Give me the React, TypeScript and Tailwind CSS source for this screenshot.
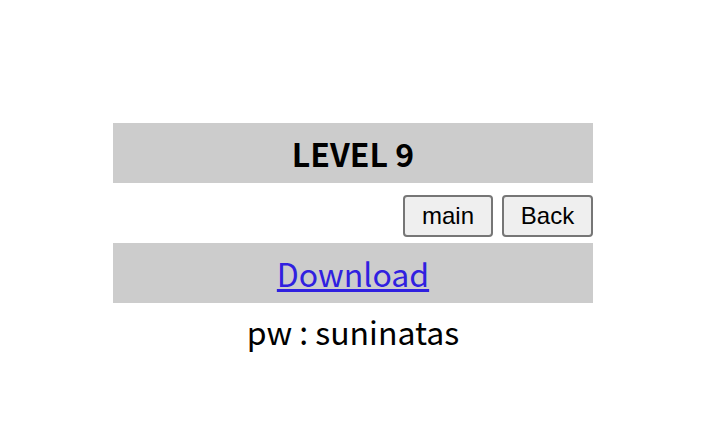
import React from "react";

const cjk = "font-['Noto_Sans_CJK_KR','Noto_Sans',sans-serif]";

export default function App() {
  return (
    <div className="w-[706px] h-[445px] bg-white flex flex-col items-center pt-[123px]">
      <div className="w-[480px] flex flex-col">
        <div className={`h-[60px] bg-[#cccccc] flex items-center justify-center text-[32px] font-bold text-black ${cjk}`}>
          LEVEL 9
        </div>
        <div className="h-[60px] flex items-end justify-end gap-[9px] pb-[6px]">
          <button className="w-[90px] h-[42px] rounded-[4px] border-2 border-[#767676] bg-[#efefef] text-[24px] text-black font-['Liberation_Sans',Arial,sans-serif]">
            main
          </button>
          <button className="w-[91px] h-[42px] rounded-[4px] border-2 border-[#767676] bg-[#efefef] text-[24px] text-black font-['Liberation_Sans',Arial,sans-serif]">
            Back
          </button>
        </div>
        <div className={`h-[60px] bg-[#cccccc] flex items-center justify-center text-[32px] ${cjk}`}>
          <a href="#" className="text-[#3020e0] underline">Download</a>
        </div>
      </div>
      <div className={`mt-[4px] text-[32px] text-black ${cjk}`}>
        pw<span className="inline-block w-[23px] text-center">:</span>suninatas
      </div>
    </div>
  );
}
